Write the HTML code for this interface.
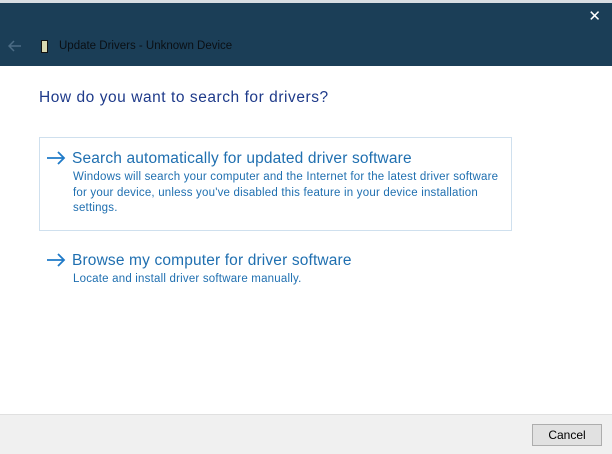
<!DOCTYPE html>
<html><head><style>
body{margin:0;width:612px;height:453px;overflow:hidden;background:#fff;font-family:"Liberation Sans",sans-serif;position:relative}
.top{position:absolute;left:0;top:0;width:612px;height:3px;background:#d8dde2}
.hdr{position:absolute;left:0;top:3px;width:612px;height:63px;background:#1b3e57}
.x{position:absolute;right:11px;top:7px;color:#fff;font-size:15px}
.dev{position:absolute;left:41px;top:40px;width:5px;height:11px;background:#d8d8b0;border:1px solid #111}
.ttl{position:absolute;left:59px;top:40px;font-size:11.5px;color:#0a0f14}
h1{position:absolute;left:39px;top:89px;margin:0;font-weight:normal;font-size:15.5px;letter-spacing:0.55px;color:#1e3a8a}
.box{position:absolute;left:39px;top:137px;width:471px;height:92px;border:1px solid #cfe0ee}
.arr{position:absolute}
.big{position:absolute;font-size:15.5px;letter-spacing:0.15px;color:#1f6fb0}
.sm{position:absolute;font-size:11.5px;letter-spacing:0.2px;color:#1f6fb0;line-height:15.5px}
.foot{position:absolute;left:0;top:414px;width:612px;height:39px;background:#f0f0f0;border-top:1px solid #e0e0e0}
.btn{position:absolute;left:532px;top:424px;width:68px;height:20px;border:1px solid #adadad;background:#e1e1e1;font-size:12px;text-align:center;line-height:20px;color:#000}
</style></head><body>
<div class="top"></div>
<div class="hdr"></div>
<div class="x">✕</div>
<svg style="position:absolute;left:8px;top:40px" width="14" height="12"><path d="M1 6H13M6 1L1 6L6 11" stroke="#4c6c85" stroke-width="1.5" fill="none"/></svg>
<div class="dev"></div>
<div class="ttl">Update Drivers - Unknown Device</div>
<h1>How do you want to search for drivers?</h1>
<div class="box"></div>
<svg class="arr" style="left:46px;top:151px" width="20" height="14"><path d="M1 7H18M12 1L18 7L12 13" stroke="#1f7ac8" stroke-width="1.8" fill="none"/></svg>
<div class="big" style="left:72px;top:150px">Search automatically for updated driver software</div>
<div class="sm" style="left:73px;top:170px">Windows will search your computer and the Internet for the latest driver software<br>for your device, unless you've disabled this feature in your device installation<br>settings.</div>
<svg class="arr" style="left:46px;top:253px" width="20" height="14"><path d="M1 7H18M12 1L18 7L12 13" stroke="#1f7ac8" stroke-width="1.8" fill="none"/></svg>
<div class="big" style="left:72px;top:252px">Browse my computer for driver software</div>
<div class="sm" style="left:73px;top:272px">Locate and install driver software manually.</div>
<div class="foot"></div>
<div class="btn">Cancel</div>
</body></html>
